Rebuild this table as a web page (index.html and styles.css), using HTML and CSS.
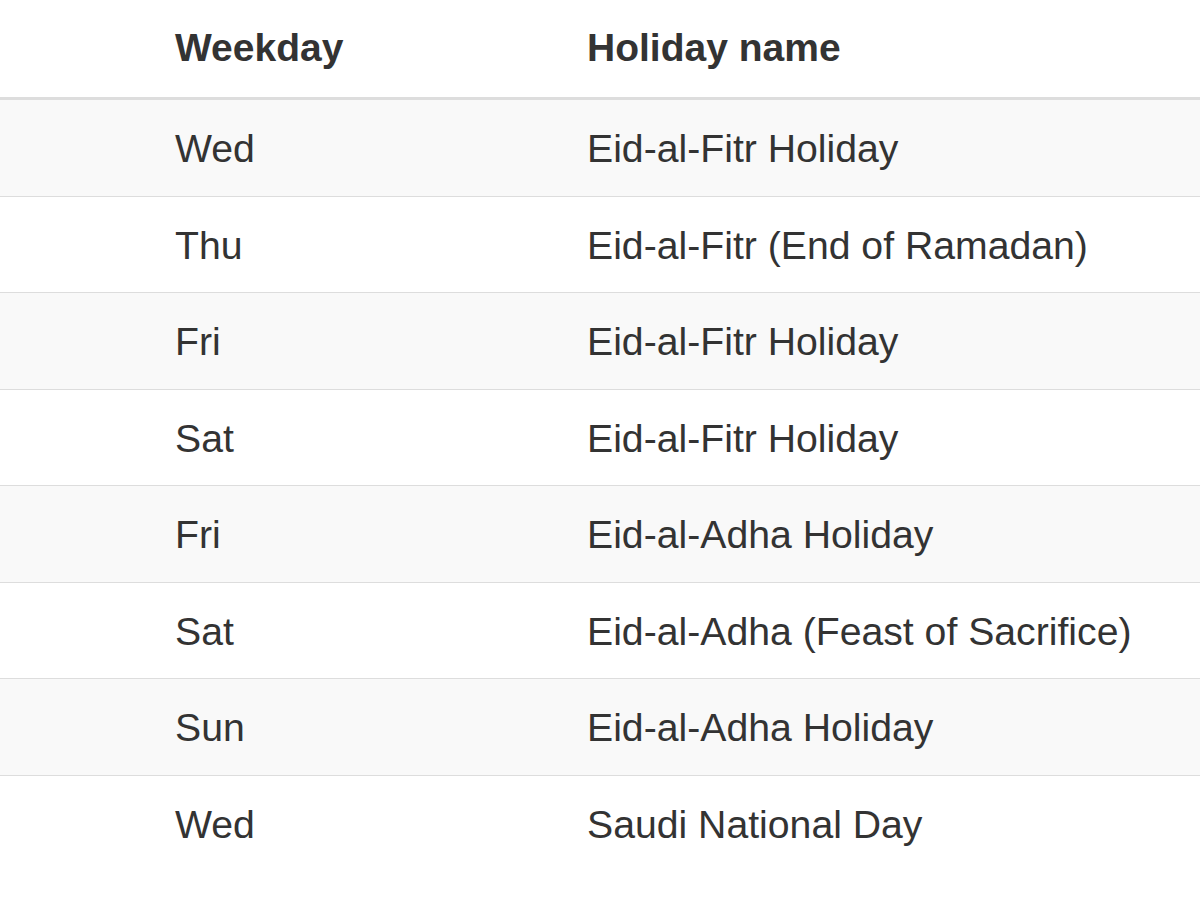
FILE: index.html
```html
<!DOCTYPE html>
<html lang="en">
<head>
<meta charset="utf-8">
<title>Holidays</title>
<link rel="stylesheet" href="styles.css">
</head>
<body>
<table class="holidays">
  <colgroup>
    <col class="col-day">
    <col class="col-name">
  </colgroup>
  <thead>
    <tr>
      <th class="cell-day">Weekday</th>
      <th class="cell-name">Holiday name</th>
    </tr>
  </thead>
  <tbody>
    <tr><td class="cell-day">Wed</td><td class="cell-name">Eid-al-Fitr Holiday</td></tr>
    <tr><td class="cell-day">Thu</td><td class="cell-name">Eid-al-Fitr (End of Ramadan)</td></tr>
    <tr><td class="cell-day">Fri</td><td class="cell-name">Eid-al-Fitr Holiday</td></tr>
    <tr><td class="cell-day">Sat</td><td class="cell-name">Eid-al-Fitr Holiday</td></tr>
    <tr><td class="cell-day">Fri</td><td class="cell-name">Eid-al-Adha Holiday</td></tr>
    <tr><td class="cell-day">Sat</td><td class="cell-name">Eid-al-Adha (Feast of Sacrifice)</td></tr>
    <tr><td class="cell-day">Sun</td><td class="cell-name">Eid-al-Adha Holiday</td></tr>
    <tr><td class="cell-day">Wed</td><td class="cell-name">Saudi National Day</td></tr>
  </tbody>
</table>
</body>
</html>
```

FILE: styles.css
```css
html, body {
  margin: 0;
  padding: 0;
  background: #ffffff;
}

body {
  font-family: "Liberation Sans", Arial, Helvetica, sans-serif;
  color: #333333;
  font-size: 39.2px;
}

.holidays {
  width: 100%;
  border-collapse: collapse;
  table-layout: fixed;
}

.col-day {
  width: 587px;
}

.holidays th,
.holidays td {
  text-align: left;
  line-height: 56px;
  white-space: nowrap;
  vertical-align: top;
}

.holidays th {
  font-weight: bold;
  font-size: 39px;
  padding-top: 20px;
  padding-bottom: 21px;
  border-bottom: 3px solid #dddddd;
}

.holidays td {
  font-weight: normal;
  padding-top: 21px;
  padding-bottom: 18.5px;
  border-top: 1px solid #dddddd;
}

.holidays tbody tr:first-child td {
  border-top: 0;
}

.holidays tbody tr:nth-child(odd) {
  background: #f9f9f9;
}

.cell-day {
  padding-left: 175px;
  padding-right: 0;
}

.cell-name {
  padding-left: 0;
  padding-right: 0;
}
```
